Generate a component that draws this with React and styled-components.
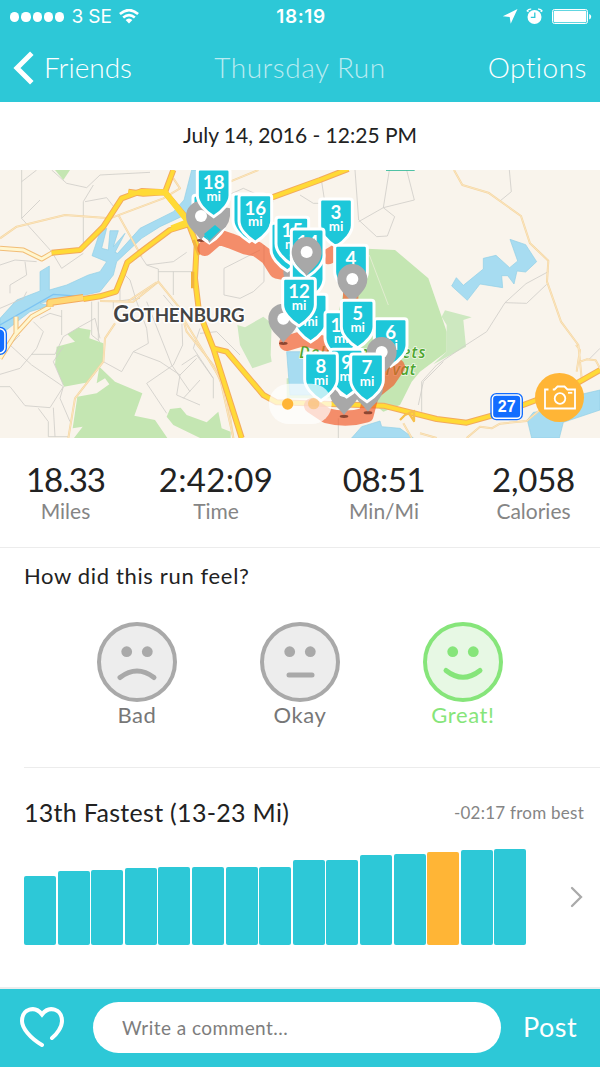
import React from 'react'
import styled, { createGlobalStyle } from 'styled-components'

const TEAL = '#2dc8d7'
const ORANGE = '#ffb536'
const GREEN = '#86e57a'

const GlobalStyle = createGlobalStyle`
  * {
    box-sizing: border-box;
  }

  body {
    margin: 0;
    background: white;
    color: #222;
    font-family: Lato, 'Liberation Sans', sans-serif;
  }
`

const Screen = styled.div`
  display: flex;
  flex-direction: column;
  width: 600px;
  height: 1067px;
  overflow: hidden;
  background: white;
`

const Text = styled.span`
  font-size: ${(p) => p.$size}px;
  font-weight: ${(p) => p.$weight || 400};
  letter-spacing: ${(p) => p.$track || 0}px;
  line-height: 1.2;
  color: ${(p) => p.$color || 'inherit'};
  white-space: nowrap;
`

const Header = styled.header`
  height: 102px;
  flex: none;
  background: ${TEAL};
  color: white;
`

const StatusBar = styled.div`
  display: grid;
  grid-template-columns: 1fr auto 1fr;
  align-items: center;
  height: 34px;
  padding: 0 8px 0 10px;
  font-family: Inter, 'Liberation Sans', sans-serif;
`

const Carrier = styled.div`
  display: flex;
  align-items: center;
  gap: 7px;
`

const Signal = styled.div`
  display: flex;
  gap: 2px;
`

const Dot = styled.i`
  width: 9.3px;
  height: 9.3px;
  border-radius: 50%;
  background: white;
`

const StatusIcons = styled.div`
  display: flex;
  align-items: center;
  justify-content: flex-end;
`

const NavBar = styled.nav`
  display: grid;
  grid-template-columns: 1fr auto 1fr;
  align-items: center;
  height: 67px;
  padding: 0 13px;
`

const NavButton = styled.button`
  display: flex;
  align-items: center;
  gap: 10px;
  justify-self: ${(p) => p.$align || 'start'};
  padding: 0;
  border: 0;
  background: none;
  color: white;
  font-family: inherit;
`

const DateRow = styled.div`
  display: flex;
  flex: none;
  align-items: center;
  justify-content: center;
  height: 68px;
  padding-bottom: 2px;
`

const MapWrapper = styled.div`
  position: relative;
  flex: none;
  height: 268px;
`

const MapSvg = styled.svg`
  display: block;
  width: 600px;
  height: 268px;
  background: #f9f4ec;
`

const CameraButton = styled.button`
  position: absolute;
  right: 16px;
  bottom: 16px;
  display: flex;
  align-items: center;
  justify-content: center;
  width: 49px;
  height: 49px;
  padding: 0;
  border: 0;
  border-radius: 50%;
  background: ${ORANGE};
`

const Stats = styled.section`
  display: grid;
  grid-template-columns: 131px 170px 166px 133px;
  flex: none;
  height: 110px;
  padding-top: 22px;
  border-bottom: 1px solid #ececec;
`

const Stat = styled.div`
  display: flex;
  flex-direction: column;
  align-items: center;

  span + span {
    margin-top: -2px;
  }
`

const Feel = styled.section`
  flex: none;
  height: 220px;
  margin-left: 24px;
  padding-top: 15px;
  border-bottom: 1px solid #ececec;
`

const Faces = styled.div`
  display: flex;
  gap: 83px;
  margin: 33px 0 0 73px;
`

const Face = styled.div`
  display: flex;
  flex-direction: column;
  align-items: center;
  width: 80px;
`

const Ranking = styled.section`
  flex: 1;
  padding: 29px 16px 0 24px;
`

const RankingHead = styled.div`
  display: flex;
  align-items: center;
  justify-content: space-between;

  span + span {
    padding-top: 2px;
  }
`

const ChartRow = styled.div`
  display: flex;
  align-items: center;
  justify-content: space-between;
  height: 96px;
  margin-top: 22px;
`

const Bars = styled.div`
  display: flex;
  align-items: flex-end;
  gap: 1.6px;
  height: 96px;
`

const Bar = styled.div`
  width: 32px;
  border-radius: 2px;
  background: ${(p) => (p.$current ? ORANGE : TEAL)};
`

const Footer = styled.footer`
  display: flex;
  flex: none;
  align-items: center;
  height: 80px;
  padding: 0 22px 2px 19px;
  border-top: 2px solid #ededed;
  background: ${TEAL};
  color: white;
`

const CommentInput = styled.input`
  width: 408px;
  height: 51px;
  margin: 0 22px 0 28px;
  padding: 0 29px;
  border: 0;
  border-radius: 26px;
  background: white;
  font-family: inherit;
  font-size: 19px;
  letter-spacing: 0.45px;

  &::placeholder {
    color: #7d7d7d;
    opacity: 1;
  }
`

const stats = [
  { value: '18.33', label: 'Miles', track: -1.1 },
  { value: '2:42:09', label: 'Time', track: 0.3 },
  { value: '08:51', label: 'Min/Mi', track: -0.5 },
  { value: '2,058', label: 'Calories', track: -0.2 },
]

const faces = [
  { label: 'Bad', mouth: 'M23 55.5Q40 42.5 57 55.5' },
  { label: 'Okay', mouth: 'M29 53H52' },
  { label: 'Great!', mouth: 'M23 48.5Q40 62 57 48.5', selected: true },
]

const runs = [69, 74, 75, 77, 78.5, 78.5, 78.5, 78.5, 85, 85, 90, 91, 93, 95, 96]
const CURRENT_RUN = 12

// map units: three to a pixel
const greyRoads = [
  'M65 15V160L155 260M65 50L110 15M65 160L120 105M155 15L200 55L260 68L300 30L450 22M280 60L250 110V235M255 110L320 98L345 130M155 260L185 310L250 265M0 300L45 285L110 290M75 290L80 330L30 360V385M0 430L70 400L80 380',
  'M365 320L390 345L410 410M420 270L440 300L475 312V350M440 300L520 290L560 262M475 320H580M520 320V390M410 410L440 490L445 535L400 560L365 620L310 590M440 410L515 600L570 680M490 390L545 455L548 540L520 600L440 655L500 745M400 560L480 590L540 630L590 580M540 630L530 690L600 720M600 645L550 700',
  'M0 545L30 540L95 600L190 665M95 568H165L190 515L240 485L285 460L300 520M0 628L60 610L110 550L130 500L100 470M0 665H30L75 722L150 728L190 665L180 700L210 770M115 730L145 770V815H205M275 410V510L300 530M295 410V525M185 435V510',
  'M160 590L190 545M160 728L165 815M185 455L150 445L120 460M30 540L60 510M160 590L190 660M340 455V410L420 400M360 330V410',
  'M672 310V390L720 400L760 380L792 350V240M672 310L780 255M600 505L650 500L720 570M545 600L590 570L640 640V700M600 490L580 550L640 640M640 110L730 70L820 110',
  'M1065 15L1076 165L1130 215L1162 213L1184 155L1150 128L1243 105L1220 15M1168 15L1150 128L1076 170M965 50L975 115H940L900 90M1528 15L1534 80L1500 108',
  'M1645 320L1578 356L1515 413L1460 500L1390 545L1310 600L1265 650V740M1515 413L1580 415L1640 358M1765 585L1800 550M1015 819V760M1330 590L1270 650L1255 720',
]

const minorRoads = [
  'M0 220L50 185L195 150L330 160L490 100L540 70L520 40',
  'M355 150L425 275M300 408L400 410L475 350L540 430L560 500L640 600L680 690L700 819',
  'M385 408L470 352M345 475L315 520L310 590L225 700L205 819',
  'M1362 15L1387 60L1465 83L1563 153L1590 235L1645 287L1641 350L1683 470L1735 540L1745 640M1728 540L1740 555L1730 620',
  'M1400 819L1440 785L1475 790L1500 776L1580 768L1620 735M1740 590L1760 583L1787 586L1800 610M1210 775L1235 819M1260 805L1310 819',
  'M690 50L775 15M540 445L660 640L700 819',
]

const majorRoads = [
  'M155 263L240 255L310 185L365 100L425 78L495 82L520 15',
  'M385 80L430 86L495 82L560 160L590 240L585 340L597 440L640 550L725 819',
  'M250 402L300 394L348 380L368 330L382 292L430 255L510 195L565 178',
  'M640 550L680 560L710 595L790 690L830 712L1150 722L1310 762L1400 773L1510 742L1650 690L1730 655L1800 615',
  'M800 103L960 45L1045 12',
]

const paleRoads = 'M0 250L70 255L125 282L158 263M0 580L45 510L95 455L150 425M48 455V510'

// numbers are left off the markers that lie under the others
const lowerMarkers = [
  { x: 748, y: 84 },
  { n: 16, x: 766, y: 86 },
  { x: 862, y: 172 },
  { n: 15, x: 877, y: 154 },
  { x: 923, y: 260 },
  { x: 932, y: 385, unit: true },
]

const upperMarkers = [
  { n: 18, x: 641, y: 9 },
  { n: 3, x: 1008, y: 99 },
  { n: 14, x: 923, y: 189, unit: false },
  { n: 12, x: 897, y: 337 },
  { n: 4, x: 1053, y: 238, unit: false },
  { n: 10, x: 1024, y: 437 },
  { n: 6, x: 1172, y: 458 },
]

const topMarkers = [
  { n: 5, x: 1073, y: 403 },
  { n: 9, x: 1040, y: 550 },
  { n: 8, x: 963, y: 561 },
  { n: 7, x: 1101, y: 564 },
]

const Marker = ({ n, x, y, unit = Boolean(n) }) => (
  <g transform={`translate(${x} ${y})`}>
    <path
      d="M-41 3H41Q49 3 49 11V82C49 104 28 129 0 146C-28 129-49 104-49 82V11Q-49 3-41 3Z"
      fill="#1dc7d9"
      stroke="white"
      strokeWidth="9"
    />
    <g fill="white" fontWeight="700" textAnchor="middle">
      {n && <text y="63" fontSize="56">{n}</text>}
      {unit && <text y="98" fontSize="40">mi</text>}
    </g>
  </g>
)

const Pin = ({ x, y }) => (
  <g transform={`translate(${x} ${y})`}>
    <path d="M0 72C-16 48-45 35-45 0A45 45 0 0 1 45 0C45 35 16 48 0 72Z" fill="#a8a8a8" />
    <circle r="18" fill="white" />
  </g>
)

const RunMap = () => (
  <MapSvg viewBox="0 15 1800 804">
    <g fill="#c4e6b2">
      <path d="M235 488L272 495L268 520L310 535V590L265 652L192 665L165 600L170 545L225 530L202 508Z" />
      <path d="M298 605L345 650L427 685L403 752L465 765L502 819H222L248 785L218 790L232 695L290 685L328 658L315 640L290 655Z" />
      <path d="M510 732L542 728L560 750L620 772L655 740L665 790L692 800V819H600L520 780L500 755Z" />
      <path d="M165 15H210L190 45Z" />
      <path d="M1065 250L1185 255L1285 340L1325 455L1340 500V560L1260 620L1235 650L1200 720L1150 740L1040 650L1000 500Z" />
      <path d="M1325 455L1335 436L1415 457L1390 465L1398 545L1300 598L1340 560V480Z" fill="#cde8c0" />
      <path d="M712 480L735 487L790 455L815 475L812 570L815 590L757 610L720 540Z" fill="#cde8c0" />
      <path d="M860 640H1000V700H860Z" fill="#cde8c0" />
    </g>
    <g fill="#a7dcf1" stroke="#91cee5" strokeWidth="2">
      <path d="M0 460L50 405L120 378V320L148 303V375L200 360L265 330L300 320L320 290L276 272L300 200L320 190L305 250L325 255L330 197H355L340 245L375 205L345 262L353 265L420 190L520 140L552 105L575 15H640V100L555 150L480 185L425 220L350 290L340 330L300 380L265 388L160 405L120 415L150 422L90 440L45 475L0 510Z" />
      <path d="M1530 223L1577 239L1610 290L1577 321L1551 318L1542 357L1523 332L1505 332L1508 368L1440 357L1402 406L1355 363L1369 338L1390 361L1450 312V280L1488 271L1529 308L1553 288Z" />
      <path d="M1055 819L1085 785L1140 768L1145 785L1200 790L1240 819Z" />
      <path d="M1582 765L1600 742L1650 735L1735 690L1800 675V735L1690 772L1678 819H1595Z" />
      <path d="M860 560H900L950 600L980 690H870Z" />
    </g>
    <path d="M0 480L160 388L255 395" fill="none" stroke="#7dc4f2" strokeWidth="4" />
    <path d="M1108 270L1165 420" fill="none" stroke="#e2edd0" strokeWidth="3" />
    <g fill="none" strokeLinejoin="round">
      <g stroke="#d0cec9" strokeWidth="2.5">
        {greyRoads.map((d) => <path key={d} d={d} />)}
      </g>
      {minorRoads.map((d) => (
        <g key={d}>
          <path d={d} stroke="#f5d6a0" strokeWidth="6" />
          <path d={d} stroke="#fbe7c4" strokeWidth="2.5" />
        </g>
      ))}
      <path d={paleRoads} stroke="#f2bd76" strokeWidth="15" />
      <path d={paleRoads} stroke="#fff6cf" strokeWidth="9" />
      <path d="M150 425V412L250 398" stroke="#f3aa5c" strokeWidth="22" />
      <path d="M150 425V412L250 398" stroke="#ffd874" strokeWidth="16" />
      {majorRoads.map((d) => <path key={d} d={d} stroke="#f3aa5c" strokeWidth="18" />)}
      {majorRoads.map((d) => <path key={d} d={d} stroke="#ffda36" strokeWidth="12" />)}
      <path d="M425 82H495L565 170L515 190" stroke="#ffda36" strokeWidth="18" />
      <path d="M578 320V370M580 225L597 270" stroke="#f3b340" strokeWidth="10" />
      <path d="M1200 765L1215 750L1242 738V768L1225 742" stroke="#f7c04a" strokeWidth="7" />
    </g>
    <path d="M1158 15H1244" stroke="#30b997" strokeWidth="5" />
    <text
      x="340"
      y="471"
      fontSize="66"
      fontWeight="700"
      fill="#444"
      stroke="white"
      strokeWidth="9"
      strokeLinejoin="round"
      paintOrder="stroke"
      textLength="394"
    >
      G<tspan fontSize="56">OTHENBURG</tspan>
    </text>
    <g
      fontFamily="'Open Sans'"
      fontSize="46"
      fontStyle="italic"
      fontWeight="600"
      fill="#4ca52f"
      stroke="#f0f7e8"
      strokeWidth="5"
      paintOrder="stroke"
    >
      <text x="898" y="580" textLength="378">Delsjöområdets</text>
      <text x="1064" y="630" textLength="182">reservat</text>
    </g>
    <path
      d="M615 250L655 215L690 227L735 245L770 252L805 278L830 318L865 325M860 535L910 520L990 540M985 275L1010 260M1052 380V420M1192 605L1165 645L1115 685L1098 750Q1040 768 980 752L935 722"
      fill="none"
      stroke="#f15b2c"
      strokeOpacity="0.68"
      strokeWidth="46"
      strokeLinecap="round"
      strokeLinejoin="round"
    />
    <g fill="#8d4631">
      <ellipse cx="604" cy="226" rx="13" ry="5" />
      <ellipse cx="850" cy="535" rx="13" ry="5" />
      <ellipse cx="1032" cy="754" rx="13" ry="5" />
      <ellipse cx="1104" cy="743" rx="13" ry="5" />
    </g>
    <Pin x={895} y={322} />
    <Marker x={628} y={88} />
    <path d="M598 175L640 120L690 130Q694 178 666 196L628 234Z" fill="#a8a8a8" />
    <Pin x={603} y={153} />
    <path d="M612 207L645 180L662 194L628 227Z" fill="#1dc7d9" />
    {lowerMarkers.map((m) => <Marker key={m.x} {...m} />)}
    <Pin x={850} y={461} />
    {upperMarkers.map((m) => <Marker key={m.n} {...m} />)}
    <Pin x={920} y={261} />
    <Pin x={1057} y={342} />
    <Pin x={1145} y={561} />
    <Pin x={1032} y={678} />
    <Pin x={1104} y={668} />
    {topMarkers.map((m) => <Marker key={m.n} {...m} />)}
    <rect x="807" y="656" width="188" height="121" rx="60" fill="white" fillOpacity="0.7" />
    <circle cx="863" cy="717" r="17" fill={ORANGE} />
    <circle cx="941" cy="716" r="17" fill="#f9bd69" fillOpacity="0.6" />
    <g stroke="white" strokeWidth="5">
      <rect x="-50" y="491" width="65" height="73" rx="16" fill="#126dff" />
      <rect x="1477" y="690" width="86" height="70" rx="12" fill="#126dff" />
    </g>
    <g fill="none" stroke="#126dff" strokeWidth="4">
      <rect x="-50" y="487" width="69" height="81" rx="19" />
      <rect x="1473" y="686" width="94" height="78" rx="16" />
    </g>
    <text x="1520" y="741" fontFamily="'Liberation Sans'" fontWeight="700" fontSize="48" fill="white" textAnchor="middle">27</text>
  </MapSvg>
)

const App = () => {
  return (
    <Screen>
      <GlobalStyle />
      <Header>
        <StatusBar>
          <Carrier>
            <Signal>
              {[1, 2, 3, 4, 5].map((n) => <Dot key={n} />)}
            </Signal>
            <Text $size={19} $track={-0.1}>3 SE</Text>
            <svg width="20" height="15" viewBox="0 0 20 15" fill="none" stroke="white" strokeWidth="2.6">
              <path d="M.9 5Q10-2.8 19.1 5M4.2 8.6Q10 3.7 15.8 8.6" />
              <path d="M6.6 11Q10 8 13.4 11L10 14.6Z" fill="white" stroke="none" />
            </svg>
          </Carrier>
          <Text $size={19} $weight={600} $track={0.6}>18:19</Text>
          <StatusIcons>
            <svg width="90" height="18" viewBox="0 0 90 18" fill="white">
              <path d="M.8 8.2L15.5 1L8.7 15.7L7.7 9Z" />
              <circle cx="32.5" cy="9" r="7" />
              <path d="M26.5 3.8L25.2 2.9Q26.5.8 29.2 1.1M38.7 3.8L40 2.9Q38.7.8 36 1.1" stroke="white" fill="none" strokeWidth="1.3" />
              <path d="M32.8 4.5V9.3H28.8" stroke={TEAL} fill="none" strokeWidth="1.3" />
              <rect x="50.5" y="1.5" width="35" height="14" rx="2" fill="none" stroke="white" />
              <rect x="51.7" y="2.7" width="32.6" height="11.6" rx="1" />
              <path d="M87.2 6Q89.2 6.5 89.2 8.7T87.2 11.5Z" />
            </svg>
          </StatusIcons>
        </StatusBar>
        <NavBar>
          <NavButton>
            <svg width="21" height="34" viewBox="0 0 21 34" fill="none" stroke="white" strokeWidth="5">
              <path d="M18.8 2.3L4 17L18.8 31.7" />
            </svg>
            <Text $size={28} $weight={300}>Friends</Text>
          </NavButton>
          <Text $size={28} $weight={300} $track={0.5} $color="#b9ebf1">Thursday Run</Text>
          <NavButton $align="end">
            <Text $size={28} $weight={300} $track={0.5}>Options</Text>
          </NavButton>
        </NavBar>
      </Header>

      <DateRow>
        <Text $size={21}>July 14, 2016 - 12:25 PM</Text>
      </DateRow>

      <MapWrapper>
        <RunMap />
        <CameraButton aria-label="Add photo">
          <svg width="34" height="27" viewBox="0 0 34 27" fill="none" stroke="white" strokeWidth="1.8">
            <path d="M5.5 5.5H2V24.5H32V5.5H24.5L21.5 2.5H14.5L11.5 5.5H9.8" />
            <circle cx="17" cy="14.5" r="5.3" />
            <path d="M25 8.8H29.3" />
          </svg>
        </CameraButton>
      </MapWrapper>

      <Stats>
        {stats.map((s) => (
          <Stat key={s.label}>
            <Text $size={33} $track={s.track}>{s.value}</Text>
            <Text $size={21} $color="#858585">{s.label}</Text>
          </Stat>
        ))}
      </Stats>

      <Feel>
        <Text $size={22} $track={0.65}>How did this run feel?</Text>
        <Faces>
          {faces.map(({ label, mouth, selected }) => (
            <Face key={label}>
              <svg
                width="80"
                height="80"
                viewBox="0 0 80 80"
                fill="none"
                stroke={selected ? GREEN : '#a9a9a9'}
                strokeWidth="4"
              >
                <circle cx="40" cy="40" r="38" fill={selected ? '#e7f8e4' : '#ededed'} />
                <path d={mouth} strokeWidth="5" strokeLinecap="round" />
                <g fill={selected ? GREEN : '#a9a9a9'} stroke="none">
                  <circle cx="29.7" cy="29.7" r="5.4" />
                  <circle cx="50.3" cy="29.7" r="5.4" />
                </g>
              </svg>
              <Text $size={22} $track={0.6} $color={selected ? GREEN : '#777'}>{label}</Text>
            </Face>
          ))}
        </Faces>
      </Feel>

      <Ranking>
        <RankingHead>
          <Text $size={25} $track={0.3}>13th Fastest (13-23 Mi)</Text>
          <Text $size={17} $track={0.25} $color="#858585">-02:17 from best</Text>
        </RankingHead>
        <ChartRow>
          <Bars>
            {runs.map((height, i) => (
              <Bar key={i} $current={i === CURRENT_RUN} style={{ height }} />
            ))}
          </Bars>
          <svg width="14" height="22" viewBox="0 0 14 22" fill="none" stroke="#aaa" strokeWidth="2.3" strokeLinecap="round">
            <path d="M2 2L11 11L2 20" />
          </svg>
        </ChartRow>
      </Ranking>

      <Footer>
        <svg width="46" height="42" viewBox="0 0 46 42" fill="none" stroke="white" strokeWidth="4" strokeLinecap="round">
          <path d="M23 39C11 32 3 22 3 15C3 3 16-1 23 8.5C30-1 43 3 43 15C43 21 38 28 33 32" />
        </svg>
        <CommentInput placeholder="Write a comment..." />
        <Text $size={27} $track={0.5}>Post</Text>
      </Footer>
    </Screen>
  )
}

export default App
